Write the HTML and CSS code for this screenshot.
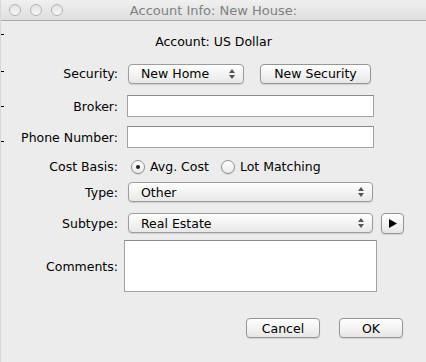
FILE: index.html
```html
<!DOCTYPE html>
<html lang="en">
<head>
  <meta charset="UTF-8">
  <title>Account Info: New House:</title>
  <link rel="stylesheet" href="styles.css">
</head>
<body>
  <div class="window">
    <div class="titlebar">
      <div class="lights">
        <span class="light"></span>
        <span class="light"></span>
        <span class="light"></span>
      </div>
      <div class="title">Account Info: New House:</div>
    </div>

    <div class="content">
      <div class="account">Account: US Dollar</div>

      <div class="row row-security">
        <label class="label">Security:</label>
        <div class="field">
          <div class="popup popup-security">New Home
            <svg class="arrows" width="6" height="10" viewBox="0 0 6 10"><path d="M3 0 L6 4 L0 4 Z M0 6 L6 6 L3 10 Z" fill="#555"/></svg>
          </div>
          <button class="btn btn-newsec">New Security</button>
        </div>
      </div>

      <div class="row row-broker">
        <label class="label" for="broker">Broker:</label>
        <div class="field"><input class="text" id="broker" type="text"></div>
      </div>

      <div class="row row-phone">
        <label class="label" for="phone">Phone Number:</label>
        <div class="field"><input class="text" id="phone" type="text"></div>
      </div>

      <div class="row row-cost">
        <label class="label">Cost Basis:</label>
        <div class="field">
          <span class="radio checked"></span><span class="radio-text">Avg. Cost</span>
          <span class="radio"></span><span class="radio-text">Lot Matching</span>
        </div>
      </div>

      <div class="row row-type">
        <label class="label">Type:</label>
        <div class="field">
          <div class="popup popup-wide">Other
            <svg class="arrows" width="6" height="10" viewBox="0 0 6 10"><path d="M3 0 L6 4 L0 4 Z M0 6 L6 6 L3 10 Z" fill="#555"/></svg>
          </div>
        </div>
      </div>

      <div class="row row-subtype">
        <label class="label">Subtype:</label>
        <div class="field">
          <div class="popup popup-wide">Real Estate
            <svg class="arrows" width="6" height="10" viewBox="0 0 6 10"><path d="M3 0 L6 4 L0 4 Z M0 6 L6 6 L3 10 Z" fill="#555"/></svg>
          </div>
          <button class="btn btn-arrow">
            <svg width="9" height="9" viewBox="0 0 9 9"><path d="M1 0 L9 4.5 L1 9 Z" fill="#000"/></svg>
          </button>
        </div>
      </div>

      <div class="row row-comments">
        <label class="label" for="comments">Comments:</label>
        <div class="field"><textarea class="comments" id="comments"></textarea></div>
      </div>

      <div class="actions">
        <button class="btn btn-cancel">Cancel</button>
        <button class="btn btn-ok">OK</button>
      </div>
    </div>
  </div>
</body>
</html>
```

FILE: styles.css
```css
body {
  margin: 0;
  font-family: "DejaVu Sans", sans-serif;
  font-size: 12.5px;
  color: #000;
  background: #fff;
}
.window {
  width: 426px;
  height: 362px;
  background:
    linear-gradient(#000, #000) 0 34px / 3px 1px no-repeat,
    linear-gradient(#000, #000) 0 71px / 3px 1px no-repeat,
    linear-gradient(#000, #000) 0 106px / 3px 1px no-repeat,
    linear-gradient(#000, #000) 0 141px / 3px 1px no-repeat,
    #ececec;
  border-left: 1px solid #d8d8d8;
  box-sizing: border-box;
}
.titlebar {
  height: 21px;
  box-sizing: border-box;
  border-bottom: 1px solid #a9a9a9;
  background: linear-gradient(#f0f0f0, #dedede);
  display: flex;
  align-items: center;
}
.lights {
  display: flex;
  gap: 9px;
  padding-left: 8px;
  width: 120px;
}
.light {
  width: 12px;
  height: 12px;
  box-sizing: border-box;
  border-radius: 50%;
  border: 1px solid #b3b3b3;
  background: linear-gradient(#e2e2e2, #f6f6f6);
}
.title {
  flex: 1;
  text-align: center;
  color: #808080;
  font-size: 13px;
  padding-right: 112px;
  margin-left: -16px;
}
.content {
  padding-top: 11px;
}
.account {
  text-align: center;
  height: 20px;
  line-height: 20px;
}
.row {
  display: grid;
  grid-template-columns: 117px 1fr;
  column-gap: 9px;
  align-items: center;
}
.label {
  text-align: right;
}
.field {
  display: flex;
  align-items: center;
}
.row-security { margin-top: 11px; height: 21px; }
.row-broker { margin-top: 11px; height: 22px; }
.row-phone { margin-top: 9px; height: 22px; }
.row-cost { margin-top: 9px; height: 19px; }
.row-type { margin-top: 6px; height: 20px; }
.row-subtype { margin-top: 10px; height: 22px; }
.row-comments { margin-top: 6px; height: 52px; }

.popup {
  position: relative;
  height: 20px;
  box-sizing: border-box;
  border: 1px solid #9c9c9c;
  border-radius: 4px;
  background: linear-gradient(#ffffff, #f1f1f1 60%, #e8e8e8);
  box-shadow: 0 1px 1px rgba(0, 0, 0, 0.12);
  display: flex;
  align-items: center;
  padding-left: 12px;
  margin-left: 1px;
}
.arrows {
  margin-left: auto;
  margin-right: 8px;
}
.popup-security { width: 116px; }
.popup-wide { width: 245px; }

.btn {
  font-family: inherit;
  font-size: 12.5px;
  height: 20px;
  box-sizing: border-box;
  border: 1px solid #959595;
  border-radius: 4px;
  background: linear-gradient(#ffffff, #f3f3f3 50%, #e6e6e6);
  box-shadow: 0 1px 1px rgba(0, 0, 0, 0.12);
  padding: 0;
  color: #000;
}
.btn-newsec { width: 111px; margin-left: 16px; }
.btn-arrow {
  width: 23px;
  height: 21px;
  margin-left: 8px;
  display: flex;
  align-items: center;
  justify-content: center;
}

.text {
  width: 247px;
  height: 22px;
  box-sizing: border-box;
  border: 1px solid #a3a3a3;
  border-top-color: #8a8a8a;
  background: #fff;
  margin: 0;
}
.comments {
  width: 253px;
  height: 52px;
  box-sizing: border-box;
  border: 1px solid #a3a3a3;
  border-top-color: #8a8a8a;
  background: #fff;
  margin: 0 0 0 -3px;
  resize: none;
}

.radio {
  width: 14px;
  height: 14px;
  box-sizing: border-box;
  border-radius: 50%;
  border: 1px solid #8f8f8f;
  background: linear-gradient(#ffffff, #e9e9e9);
  box-shadow: 0 1px 1px rgba(0, 0, 0, 0.1);
  display: flex;
  align-items: center;
  justify-content: center;
  margin-left: 4px;
}
.radio.checked::after {
  content: "";
  width: 4px;
  height: 4px;
  border-radius: 50%;
  background: #222;
}
.radio-text {
  margin-left: 5px;
  margin-right: 8px;
}

.actions {
  display: flex;
  justify-content: flex-end;
  gap: 19px;
  margin-top: 26px;
  padding-right: 23px;
}
.btn-cancel { width: 74px; }
.btn-ok { width: 64px; }
```
